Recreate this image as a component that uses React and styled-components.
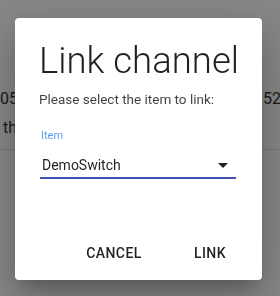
import styled, { createGlobalStyle } from "styled-components";

const Global = createGlobalStyle`
  html, body {
    margin: 0;
    padding: 0;
    background: #fff;
    font-family: Roboto, "Liberation Sans", sans-serif;
  }
`;

const Page = styled.div`
  width: 280px;
  height: 296px;
  overflow: hidden;
  display: flex;
  flex-direction: column;
  padding-top: 84px;
  box-sizing: border-box;
`;

const BgRow = styled.div`
  display: flex;
  width: 308px;
  font-size: 16px;
  line-height: 29px;
  color: #333;
  padding-left: ${(p) => p.$indent || 0}px;
  white-space: nowrap;
`;

const BgRight = styled.span`
  margin-left: auto;
`;

const BgDivider = styled.div`
  height: 1px;
  background: #e0e0e0;
  margin-top: 7px;
`;

const Backdrop = styled.div`
  position: fixed;
  inset: 0;
  background: rgba(0, 0, 0, 0.47);
`;

const Dialog = styled.div`
  position: fixed;
  left: 15px;
  top: 18px;
  width: 247px;
  height: 262px;
  background: #fff;
  border-radius: 4px;
  box-shadow: 0px 11px 15px -7px rgba(0, 0, 0, 0.2),
    0px 24px 38px 3px rgba(0, 0, 0, 0.14), 0px 9px 46px 8px rgba(0, 0, 0, 0.12);
  display: flex;
  flex-direction: column;
  box-sizing: border-box;
  padding: 21px 0 0;
`;

const Content = styled.div`
  padding: 0 24px;
  display: flex;
  flex-direction: column;
`;

const Title = styled.h2`
  margin: 0;
  font-size: 36.5px;
  font-weight: 300;
  line-height: 44px;
  white-space: nowrap;
  color: rgba(0, 0, 0, 0.87);
`;

const Text = styled.p`
  margin: 6px 0 0;
  font-size: 13.5px;
  line-height: 20px;
  color: rgba(0, 0, 0, 0.75);
`;

const Field = styled.div`
  margin-top: 20px;
  display: flex;
  flex-direction: column;
`;

const Label = styled.label`
  font-size: 11px;
  line-height: 13px;
  color: #5a9cf5;
  padding-left: 2px;
`;

const Select = styled.div`
  margin: 13px 2px 0 1px;
  display: flex;
  align-items: center;
  justify-content: space-between;
  border-bottom: 2px solid #3f51b5;
  font-size: 14px;
  line-height: 20px;
  padding: 0 8px 2px 2px;
  color: rgba(0, 0, 0, 0.87);
`;

const Actions = styled.div`
  margin-top: auto;
  display: flex;
  justify-content: flex-end;
  gap: 8px;
  padding: 8px 8px 9px;
`;

const Button = styled.button`
  border: 0;
  background: none;
  font-family: inherit;
  font-size: 14px;
  font-weight: 500;
  letter-spacing: 0.02857em;
  text-transform: uppercase;
  color: rgba(0, 0, 0, 0.87);
  padding: 6px 8px;
  min-width: 88px;
  line-height: 24px;
`;

export default function App() {
  return (
    <>
      <Global />
      <Page>
        <BgRow $indent={-6}>
          <span>050</span>
          <BgRight>52000</BgRight>
        </BgRow>
        <BgRow $indent={3}>
          <span>the</span>
        </BgRow>
        <BgDivider />
      </Page>
      <Backdrop />
      <Dialog>
        <Content>
          <Title>Link channel</Title>
          <Text>Please select the item to link:</Text>
          <Field>
            <Label>Item</Label>
            <Select>
              <span>DemoSwitch</span>
              <svg width="10" height="5" viewBox="7 10 10 5">
                <path d="M7 10l5 5 5-5z" fill="rgba(0,0,0,0.87)" />
              </svg>
            </Select>
          </Field>
        </Content>
        <Actions>
          <Button>Cancel</Button>
          <Button>Link</Button>
        </Actions>
      </Dialog>
    </>
  );
}
